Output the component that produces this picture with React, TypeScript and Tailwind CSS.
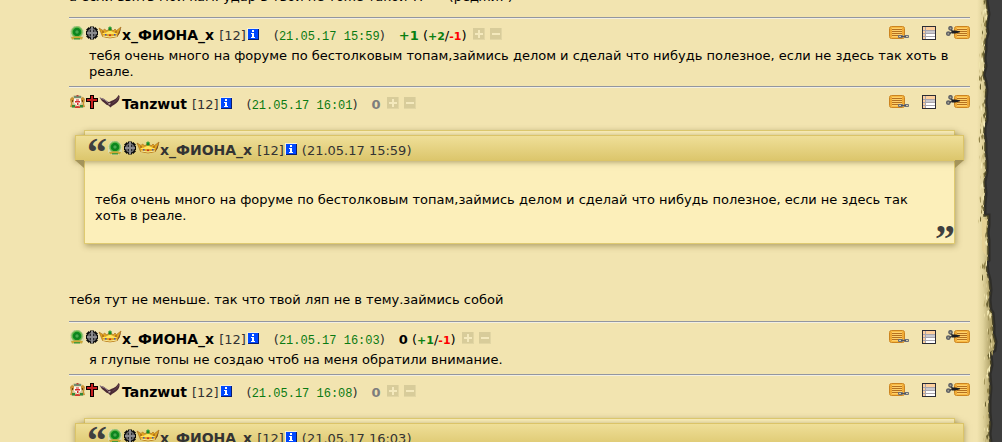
import type { ReactNode } from 'react';

const BADGE_TEETH = [0, 45, 90, 135];

function GreenBadge() {
  return (
    <svg className="block h-3.5 w-4 shrink-0" viewBox="0 0 16 14">
      <path d="M4 0h7l4 4v6l-2 4H3l-2-3V4z" fill="#d9dcae" />
      <circle cx="8" cy="6" r="5.7" fill="#6cba52" stroke="#9dbd72" strokeWidth="1" strokeDasharray="1.500 1" />
      <circle cx="8" cy="6" r="4.300" fill="#0c8c1e" />
      <circle cx="8" cy="6" r="2.200" fill="#45ad4f" stroke="#086e18" strokeWidth="0.8" />
      <path d="M2 11 Q8 9.500 14 11 L13 13.500 Q8 12 3 13.500 Z" fill="#cda838" />
      <path d="M5 12h6v1.500H5z" fill="#4c9a35" />
    </svg>
  );
}

function Wheel() {
  return (
    <svg className="block h-3.5 w-3 shrink-0" viewBox="0 0 12 14">
      <g fill="#0a0a0a">
        {BADGE_TEETH.map((angle) => (
          <rect key={angle} x="4" y="0.500" width="4" height="13" transform={`rotate(${angle} 6 7)`} />
        ))}
      </g>
      <circle cx="6" cy="7" r="4.700" fill="#66666a" />
      <path d="M5 1h2v12H5zM1 6h10v2H1z" fill="#8a8a8e" />
      <path d="M4 4h1v2H4zM7 4h1v2H7zM4 8h1v2H4zM7 8h1v2H7z" fill="#2c2c30" />
    </svg>
  );
}

function Crown() {
  return (
    <svg className="block h-3.5 w-6 shrink-0" viewBox="0 0 24 14">
      <path
        d="M1 2 L5 4.500 L6.500 3 L9 5 L12 1.500 L15 5 L17 3 L18.500 4.500 L23 1 L19.500 10.500 Q12 13.500 4.500 10.500 Z"
        fill="#e0a421"
        stroke="#a3671a"
        strokeWidth="0.6"
      />
      <path d="M4.500 6 L7 7 L12 4.500 L17 7 L19 6 L18.500 8 L5 8 Z" fill="#ffe35e" />
      <path d="M19 10.500 L23.300 1.300 L21.500 7.500 Z" fill="#6e3b14" />
      <path d="M5 10 Q12 12 19 10" fill="none" stroke="#f8e999" strokeWidth="1" />
      <path d="M10.500 1h3v3.500h-3z" fill="#118a28" />
      <path d="M11.500 0h1v2h-1z" fill="#5cba4f" />
      <path d="M7 8h1.500v1.500H7zM16 8h1.500v1.500H16z" fill="#3f59b8" />
      <path d="M11 8.500h2V10h-2z" fill="#c8301f" />
      <path d="M4 5h2v2H4zM17 5h2v2h-2z" fill="#b87a18" />
    </svg>
  );
}

function Emblem() {
  return (
    <svg className="block h-3.5 w-[17px] shrink-0" viewBox="0 0 17 14">
      <path d="M5 0h6l3 2 2 3-1 3 1 4-2 1H3l-2-1 1-4-1-3 2-3z" fill="#d6c797" />
      <path d="M1 4l2-2 2 1v3L3 8l1 4H1l1-3z" fill="#c99232" />
      <path d="M16 4l-2-2-2 1v3l2 2-1 4h3l-1-3z" fill="#c99232" />
      <path d="M5 1h7v2H5z" fill="#6f8f72" />
      <path d="M7.500 0h2v1.500h-2z" fill="#b5453b" />
      <path d="M5 3.500h7V8l-3.500 3L5 8z" fill="#faf6ee" />
      <path d="M7 4.500h3v1H7zM6 6h5v1.500H6zM8 8h1.500v2H8z" fill="#d42b2b" />
      <path d="M3 10h3v2.500H3zM11 10h3v2.500h-3z" fill="#348a35" />
      <path d="M6 11.500l2.500-.5 2.500.5V13H6z" fill="#d2392f" />
      <path d="M3 5h1v2H3zM13 5h1v2h-1z" fill="#6b421c" />
    </svg>
  );
}

function Cross() {
  return (
    <svg className="block h-3.5 w-3 shrink-0" viewBox="0 0 12 14" shapeRendering="crispEdges">
      <path d="M4 0h4v3h4v4H8v7H4V7H0V3h4z" fill="#0b0000" />
      <path d="M5 1h2v3h4v2H7v7H5V6H1V4h4z" fill="#c71f1f" />
    </svg>
  );
}

function Eagle() {
  return (
    <svg className="block h-3.5 w-6 shrink-0" viewBox="0 0 24 14">
      <path
        d="M1.500 2.500 Q6 3 9.500 6.500 Q11 7.500 13 6 Q18.500 4.500 20.500 0 L21.500 1 Q22 5 18.500 8 Q16 10 14 11 L12.500 12.500 L10.500 10.500 Q8.500 10 6.500 8 L4 6 Z"
        fill="#4a2a34"
      />
      <path d="M2 3 Q6.500 4 10 7.500" fill="none" stroke="#9b8b96" strokeWidth="0.9" />
      <path d="M14.500 8 Q19 6 21 1.500" fill="none" stroke="#6b4953" strokeWidth="0.8" />
      <path d="M10 8.500l2-.8.8 1.300-1.800 1z" fill="#b9a6a4" />
    </svg>
  );
}

function InfoIcon() {
  return (
    <svg className="block h-3 w-3" viewBox="0 0 12 12" shapeRendering="crispEdges">
      <path d="M0 0h12v12H0z" fill="#f4f0dc" />
      <path d="M1 1h11v11H1z" fill="#0a1c6e" />
      <path d="M1 1h10v10H1z" fill="#0048ff" />
      <path d="M5 2h2v2H5zM4 5h3v4h1v1H4V9h1V6H4z" fill="#ffffff" />
    </svg>
  );
}

function ScrollShape() {
  return (
    <>
      <rect x="0.500" y="0.500" width="15" height="12" rx="2" fill="#f7b943" stroke="#cc8420" />
      <path d="M2 2v9M14 2v9" stroke="#e79a2a" />
      <path d="M3 3.500h10M3 5.500h10M3 7.500h10M3 9.500h10" stroke="#b5711f" />
      <path d="M3 2.500h10M3 4.500h10M3 6.500h10M3 8.500h10M3 10.500h10" stroke="#ffd06a" />
    </>
  );
}

function LinkIcon() {
  return (
    <svg className="block h-3.5 w-5" viewBox="0 0 20 14">
      <ScrollShape />
      <path d="M9.500 9.500h4v2h-4zM15.500 9.500h4v2h-4z" fill="#d7cda5" stroke="#6b6f7a" />
      <path d="M12 10.500h5" stroke="#4f535e" />
    </svg>
  );
}

function TableIcon() {
  return (
    <svg className="block h-3.5 w-3.5" viewBox="0 0 14 14" shapeRendering="crispEdges">
      <path d="M0 0h14v14H0z" fill="#2b2b33" />
      <path d="M1 1h12v12H1z" fill="#ffffff" />
      <path d="M1 1h12v3H1zM1 4h2v9H1z" fill="#fdcf9d" />
      <path d="M4 4h9v3H4z" fill="#c9c9cf" />
      <path d="M1 4h12v1H1zM1 7h12v1H1zM1 10h12v1H1zM3 1h1v12H3z" fill="#a9a5ac" />
    </svg>
  );
}

function CutIcon() {
  return (
    <svg className="block h-3.5 w-6" viewBox="0 0 24 14">
      <g transform="translate(8 0)">
        <ScrollShape />
      </g>
      <circle cx="4.500" cy="2.300" r="1.600" fill="#a5a292" stroke="#5f6165" strokeWidth="1.500" />
      <circle cx="2.300" cy="7.700" r="1.600" fill="#a5a292" stroke="#5f6165" strokeWidth="1.500" />
      <path d="M5 4 L7 6 M4 7.300 L7 5.500" stroke="#3c3d40" strokeWidth="1.500" />
      <path d="M6 4.500h3l5 .8v1L9.500 7.500H6z" fill="#1d1d20" />
    </svg>
  );
}

function VoteButton({ sign }: { sign: '+' | '-' }) {
  return (
    <button type="button" aria-label={sign === '+' ? 'Плюс' : 'Минус'} className="block cursor-pointer">
      <svg className="block h-3 w-3" viewBox="0 0 12 12" shapeRendering="crispEdges">
        <path d="M0 0h12v12H0z" fill="#d8cc9a" />
        <path d="M0 11h12v1H0zM11 0h1v12h-1z" fill="#e2d6a4" />
        <path d="M2 5h8v2H2z" fill="#f4e9bd" />
        {sign === '+' && <path d="M5 2h2v8H5z" fill="#f4e9bd" />}
      </svg>
    </button>
  );
}

type UserName = 'x_ФИОНА_x' | 'Tanzwut';

function User({ name }: { name: UserName }) {
  return (
    <span className="flex items-baseline">
      {name === 'Tanzwut' ? (
        <>
          <Emblem />
          <Cross />
          <Eagle />
        </>
      ) : (
        <>
          <GreenBadge />
          <span className="w-px" />
          <Wheel />
          <Crown />
        </>
      )}
      <a href="#user" className="mr-[5px] text-sm leading-4 font-bold">
        {name}
      </a>
      <span className="mr-px text-[#333]">[12]</span>
      <a href="#info" aria-label="Информация о персонаже">
        <InfoIcon />
      </a>
    </span>
  );
}

interface PostProps {
  name: UserName;
  date: string;
  score: ReactNode;
  children: ReactNode;
}

function Post({ name, date, score, children }: PostProps) {
  return (
    <article>
      <hr className="h-0.5 border-t border-b border-t-[#9396a0] border-b-[#f3efe2]" />
      <header className="flex h-[25px] items-baseline pt-[7px]">
        <User name={name} />
        <span className="ml-[15px] text-[#333]">
          (<time className="font-['Liberation_Mono',monospace] text-xs leading-4 text-[#0a7a12]">{date}</time>)
        </span>
        <span className="mr-1.5 ml-3.5">{score}</span>
        <span className="flex gap-[5px]">
          <VoteButton sign="+" />
          <VoteButton sign="-" />
        </span>
        <nav className="ml-auto flex items-start self-start">
          <a href="#link" aria-label="Ссылка" className="mr-[13px]">
            <LinkIcon />
          </a>
          <a href="#table" aria-label="Таблица" className="mr-2.5">
            <TableIcon />
          </a>
          <a href="#cut" aria-label="Цитировать">
            <CutIcon />
          </a>
        </nav>
      </header>
      {children}
    </article>
  );
}

function PostText({ children }: { children: ReactNode }) {
  return <p className="pt-1 pr-2 pb-1.5 pl-5">{children}</p>;
}

interface QuoteProps {
  name: UserName;
  date: string;
  children: ReactNode;
}

function Quote({ name, date, children }: QuoteProps) {
  return (
    <blockquote className="relative mx-[15px] mt-[17px] border border-[#dfca70] bg-[#fcefba] pt-1 shadow-[1px_2px_6px_rgba(90,75,20,0.45)]">
      <div className="relative -mx-2.5 flex h-[26px] items-baseline border border-[#dbc468] bg-linear-to-b from-[#efdf98] to-[#dcc66c] pt-[5px] text-[#333] shadow-[0_1px_6px_rgba(90,75,20,0.5)]">
        <span className="ml-[11px] h-3 w-5 self-start font-['Liberation_Serif',serif] text-[40px] leading-6 font-bold text-[#3f3f3f]">
          “
        </span>
        <User name={name} />
        <span className="ml-[5px]">({date})</span>
        <span className="absolute top-full -left-px h-2 w-[9px] bg-[#a4945a] [clip-path:polygon(0_0,100%_0,100%_100%)]" />
        <span className="absolute top-full -right-px h-2 w-[9px] bg-[#a4945a] [clip-path:polygon(0_0,100%_0,0_100%)]" />
      </div>
      <p className="pt-[31px] pr-10 pb-[19px] pl-2.5">{children}</p>
      <span className="absolute right-0 bottom-1 h-4 w-5 translate-x-px font-['Liberation_Serif',serif] text-[40px] leading-8 font-bold text-[#3f3f3f]">
        ”
      </span>
    </blockquote>
  );
}

// torn right side of the parchment
const EDGE =
  '16,0 17,8 18,14 17,20 16,26 17,33 15,40 15,50 14,58 15,66 13,75 15,82 16,90 15,102 16,112 16,120 14,127 14,134 15,142 15,152 16,162 16,172 14,182 15,193 14,205 14,216 18,216 18,225 17,233 18,240 18,260 16,262 17,272 19,280 20,290 19,300 20,310 22,313 23,325 23,334 25,342 24,350 20,353 21,365 19,374 20,388 19,400 19,412 20,424 19,434 20,442';

const EDGE_POINTS = EDGE.split(' ').map((point) => point.split(',').map(Number));

const SPECK_COLORS = ['#6b6231', '#c4b579', '#8f8148', '#f4ebb8', '#a2945a', '#d9cb92', '#efe4ac'];

function ParchmentEdge() {
  return (
    <svg className="block h-full w-8 shrink-0 bg-[#3d3d3d]" viewBox="0 0 32 442" preserveAspectRatio="none" aria-hidden="true">
      <defs>
        <linearGradient id="parchment" gradientUnits="userSpaceOnUse" x1="0" y1="0" x2="20" y2="0">
          <stop offset="0.35" stopColor="#f2e4b0" />
          <stop offset="0.65" stopColor="#e0d39c" />
          <stop offset="1" stopColor="#b5a76d" />
        </linearGradient>
      </defs>
      <polyline points={EDGE} fill="none" stroke="#2e2d29" strokeWidth="5" />
      <polygon points={`0,0 ${EDGE} 0,442`} fill="url(#parchment)" />
      <polyline points={EDGE} fill="none" stroke="#4b4525" strokeWidth="1.500" strokeDasharray="9 2 4 3" />
      {EDGE_POINTS.map(([x, y], i) => (
        <g key={i}>
          <path d={`M${x - 1} ${y}v${3 + (i % 4)}l-1 2-1-4z`} fill={SPECK_COLORS[(i * 3) % 7]} />
          <path d={`M${x - 3 - (i % 3)} ${y + (i % 5)}l1 2v${2 + (i % 3)}l-1 1z`} fill={SPECK_COLORS[(i * 5 + 1) % 7]} />
          <path d={`M${x - 6} ${y + 3}l1 2-1 3z`} fill={i % 2 === 0 ? '#ede0a8' : '#d3c48a'} />
        </g>
      ))}
      <path d="M12 218 L17 220 L15 238 L16 256 L12 250 Z" fill="#e5d295" />
    </svg>
  );
}

export default function App() {
  return (
    <div className="flex h-screen overflow-hidden bg-[#f2e4b0] font-['DejaVu_Sans',Verdana,sans-serif] text-[13px] leading-4 text-black">
      <main className="-mt-[11px] min-w-0 flex-1 pl-[69px]">
        <p className="mb-3 whitespace-pre">а если взять мой кам. удар в твой не тоже такой ?!{'      '}(реджи!&apos;)</p>

        <Post
          name="x_ФИОНА_x"
          date="21.05.17 15:59"
          score={
            <>
              <b className="text-[#0a7f12]">+1</b> (<b className="text-[11px] text-[#0a7f12]">+2</b>/
              <b className="text-[11px] text-[#ff0000]">-1</b>)
            </>
          }
        >
          <PostText>
            тебя очень много на форуме по бестолковым топам,займись делом и сделай что нибудь полезное, если не здесь так
            хоть в реале.
          </PostText>
        </Post>

        <Post name="Tanzwut" date="21.05.17 16:01" score={<b className="text-[#7d7d7d]">0</b>}>
          <Quote name="x_ФИОНА_x" date="21.05.17 15:59">
            тебя очень много на форуме по бестолковым топам,займись делом и сделай что нибудь полезное, если не здесь так
            хоть в реале.
          </Quote>
          <p className="pt-12 pb-[13px]">тебя тут не меньше. так что твой ляп не в тему.займись собой</p>
        </Post>

        <Post
          name="x_ФИОНА_x"
          date="21.05.17 16:03"
          score={
            <>
              <b>0</b> (<b className="text-[11px] text-[#0a7f12]">+1</b>/
              <b className="text-[11px] text-[#ff0000]">-1</b>)
            </>
          }
        >
          <PostText>я глупые топы не создаю чтоб на меня обратили внимание.</PostText>
        </Post>

        <Post name="Tanzwut" date="21.05.17 16:08" score={<b className="text-[#7d7d7d]">0</b>}>
          <Quote name="x_ФИОНА_x" date="21.05.17 16:03">
            я глупые топы не создаю чтоб на меня обратили внимание.
          </Quote>
        </Post>
      </main>
      <ParchmentEdge />
    </div>
  );
}
